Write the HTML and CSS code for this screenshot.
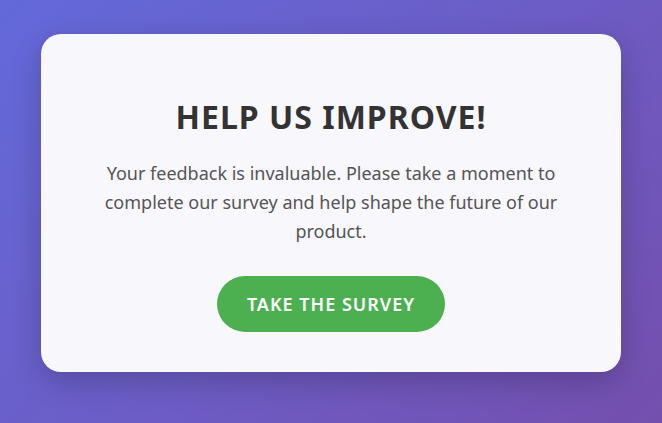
FILE: index.html
```html
<!DOCTYPE html>
<html>
<head>
<meta charset="utf-8">
<title>Survey</title>
<link rel="stylesheet" href="styles.css">
</head>
<body>
<div class="card">
	<h1 class="title">Help Us Improve!</h1>
	<p class="text">Your feedback is invaluable. Please take a moment to complete our survey and help shape the future of our product.</p>
	<a class="btn" href="#">Take the Survey</a>
</div>
</body>
</html>
```

FILE: styles.css
```css
html, body{height:100%;}
body{margin:0; padding:0 0 17px; box-sizing:border-box; display:flex; align-items:center; justify-content:center; font-family:"Noto Sans", "Open Sans", sans-serif; background:linear-gradient(135deg, #6369da 0%, #6c5dc6 50%, #744fae 100%);}
.card{width:500px; padding:40px; background:#f8f7fc; border-radius:20px; box-shadow:0 10px 30px rgba(0,0,0,0.2); text-align:center;}
.title{margin:21px 0; font-size:32px; font-weight:700; letter-spacing:1px; text-transform:uppercase; color:#333;}
.text{margin:0 0 30px; font-size:18px; line-height:1.6; color:#555;}
.btn{display:inline-block; padding:16px 30px; border-radius:30px; background:#4caf50; color:#fff; font-size:18px; font-weight:600; letter-spacing:1px; text-transform:uppercase; text-decoration:none;}
```
